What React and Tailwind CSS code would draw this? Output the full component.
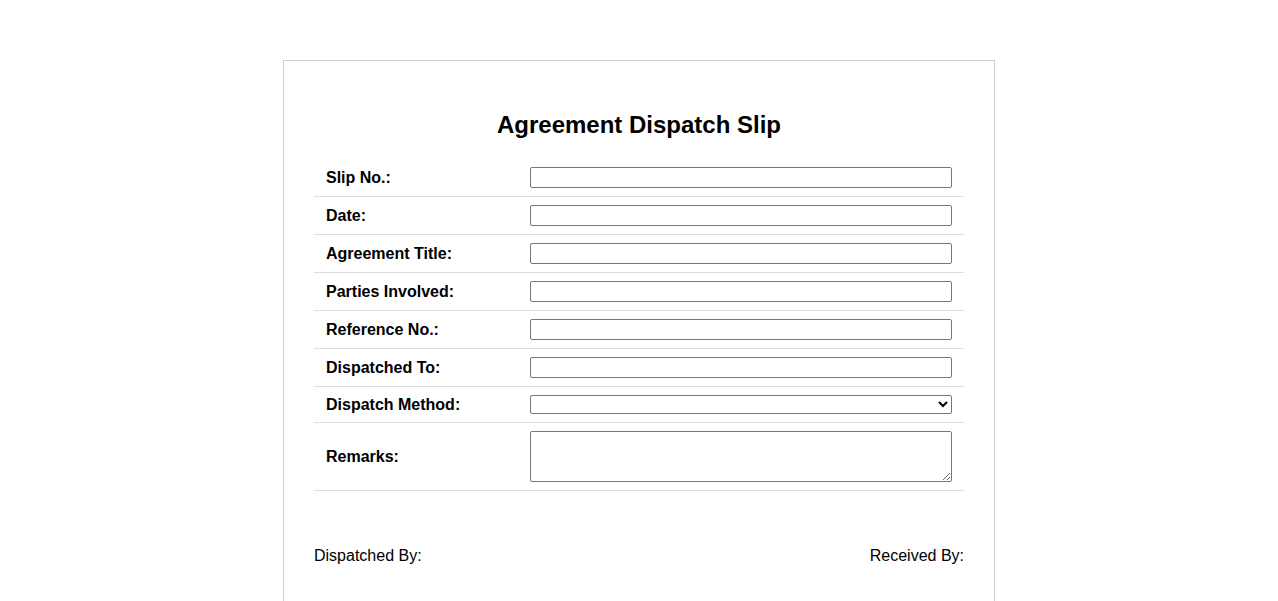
import React from 'react';

const fields = [
  'Slip No.:',
  'Date:',
  'Agreement Title:',
  'Parties Involved:',
  'Reference No.:',
  'Dispatched To:',
];

function Row({ label, children }) {
  return (
    <div className="flex items-center border-b border-[#dddddd] py-2">
      <div className="w-[204px] shrink-0 px-3 text-[16px] leading-[18px] font-bold">{label}</div>
      <div className="flex-1 px-3">{children}</div>
    </div>
  );
}

export default function App() {
  return (
    <div className="min-h-[601px] bg-white pt-[60px] text-black font-['Liberation_Sans',Arial,sans-serif]">
      <div className="mx-auto w-[712px] border border-[#cccccc] px-[30px] pt-[50px] pb-[40px]">
        <h2 className="mb-[20px] text-center text-[24px] font-bold leading-[28px]">
          Agreement Dispatch Slip
        </h2>
        <div>
          {fields.map((f) => (
            <Row key={f} label={f}>
              <input
                type="text"
                className="block h-[21px] w-full rounded-[2px] border border-[#767676] bg-white"
              />
            </Row>
          ))}
          <Row label="Dispatch Method:">
            <select className="block h-[19px] w-full rounded-[2px] border border-[#767676] bg-white text-[13px]">
              <option></option>
            </select>
          </Row>
          <Row label="Remarks:">
            <textarea className="block h-[51px] w-full rounded-[2px] border border-[#767676] bg-white" />
          </Row>
        </div>
        <div className="mt-[56px] flex justify-between text-[16px] leading-[18px]">
          <span>Dispatched By:</span>
          <span>Received By:</span>
        </div>
      </div>
    </div>
  );
}
